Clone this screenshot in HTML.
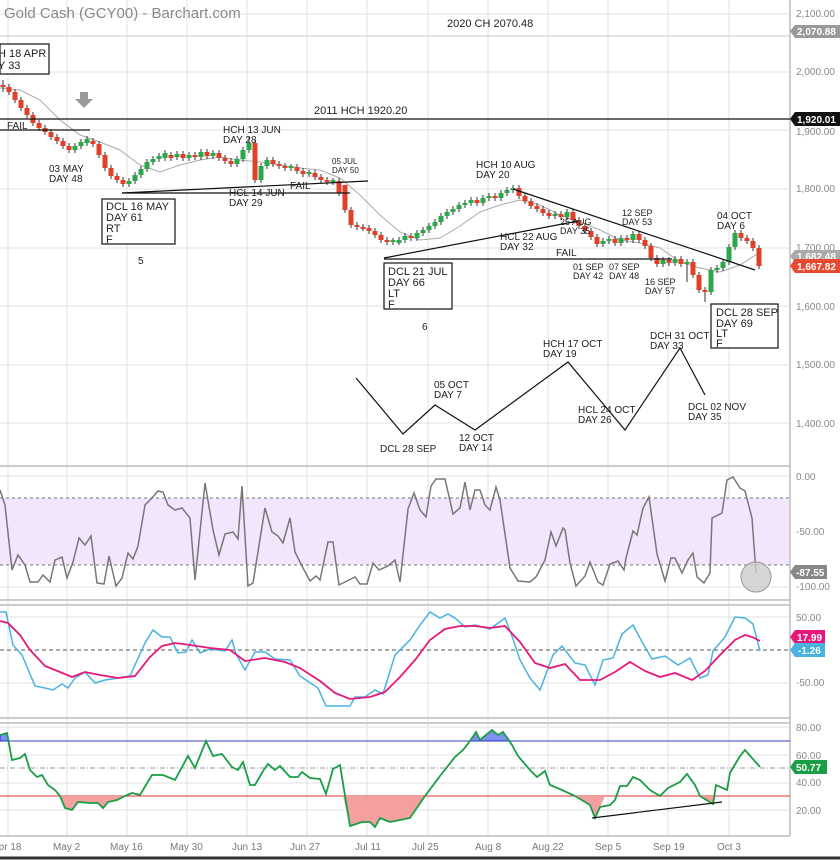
<!DOCTYPE html>
<html><head><meta charset="utf-8"><style>
body{margin:0;background:#fff;}
svg{display:block;font-family:"Liberation Sans",sans-serif;}
</style></head><body>
<svg width="840" height="860" viewBox="0 0 840 860" xmlns="http://www.w3.org/2000/svg">
<rect width="840" height="860" fill="#fff"/>
<g stroke="#e2e2e2" stroke-width="1">
<path d="M8 0V836M67 0V836M127 0V836M187 0V836M247 0V836M307 0V836M367 0V836M428 0V836M488 0V836M548 0V836M608 0V836M668 0V836M729 0V836"/>
<path d="M0 14H790M0 72H790M0 130H790M0 189H790M0 248H790M0 306H790M0 365H790M0 423H790M0 476H790M0 531H790M0 587H790M0 617H790M0 683H790M0 727H790M0 755H790M0 783H790M0 810H790"/>
<path d="M0 36H790" stroke="#ccc"/>
</g>
<rect x="0" y="498" width="790" height="67" fill="#f1e6fc"/>
<line x1="0" y1="498" x2="790" y2="498" stroke="#777" stroke-dasharray="3,3"/>
<line x1="0" y1="565" x2="790" y2="565" stroke="#777" stroke-dasharray="3,3"/>
<g stroke="#ccc" stroke-width="2">
<line x1="0" y1="466" x2="790" y2="466"/><line x1="0" y1="600" x2="790" y2="600"/>
<line x1="0" y1="605" x2="790" y2="605"/><line x1="0" y1="718" x2="790" y2="718"/>
<line x1="0" y1="723" x2="790" y2="723"/><line x1="0" y1="836" x2="790" y2="836"/>
<line x1="790" y1="0" x2="790" y2="836"/>
</g>
<line x1="0" y1="858" x2="840" y2="858" stroke="#333" stroke-width="3"/>

<!-- MA -->
<polyline fill="none" stroke="#aaa" points="0,88 20,90 40,100 60,120 80,135 100,142 120,150 140,165 160,172 180,165 200,160 220,157 240,160 260,162 280,165 300,168 320,170 340,178 360,195 380,215 400,232 420,240 440,238 460,226 480,212 500,205 520,200 540,205 560,215 580,222 600,230 620,240 640,243 660,248 680,262 700,268 720,272 740,265 760,252"/>
<!-- wicks -->
<path stroke="#333" stroke-width="1" fill="none" d="M3 80V92M9 84V95M15 89V103M21 97V111M27 105V118M33 112V126M39 120V131M45 125V135M51 129V140M57 134V144M63 138V149M69 143V153M75 143V153M81 139V149M87 136V146M93 138V147M99 141V158M105 152V171M111 165V179M117 173V183M123 177V187M129 178V187M135 172V184M141 166V178M147 159V172M153 156V165M159 153V162M165 150V161M171 152V161M177 151V160M183 151V161M189 152V161M195 152V160M201 149V160M207 149V159M213 150V159M219 150V161M225 155V164M231 158V167M237 156V167M243 147V162M249 137V153M255 140V183M261 163V183M267 157V169M273 157V167M279 161V169M285 163V171M291 164V171M297 164V174M303 168V177M309 170V177M315 170V180M321 174V183M327 177V185M333 178V185M339 178V196M345 185V213M351 207V228M357 222V230M363 224V231M369 225V234M375 228V238M381 232V243M387 237V245M393 238V245M399 237V245M405 233V243M411 233V241M417 230V241M423 227V236M429 223V233M435 219V229M441 213V225M447 209V219M453 206V215M459 202V212M465 200V208M471 197V206M477 197V206M483 195V206M489 193V201M495 193V201M501 190V201M507 187V196M513 185V193M519 185V199M525 193V204M531 198V209M537 203V212M543 206V216M549 210V219M555 211V219M561 211V220M567 209V220M573 209V223M579 217V229M585 223V234M591 228V240M597 234V247M603 238V247M609 236V244M615 236V246M621 235V246M627 235V243M633 231V243M639 231V243M645 237V249M651 243V261M657 255V267M663 257V267M669 257V266M675 256V266M681 256V267M687 259V282M693 259V278M699 272V293M705 287V302M711 267V295M717 265V273M723 259V271M729 244V265M735 230V250M741 230V241M747 235V244M753 238V251M759 245V269"/>
<!-- green bodies -->
<path stroke="#2aa84a" stroke-width="5" fill="none" d="M75 150V146M81 146V142M87 143V139M129 184V181M135 181V175M141 175V169M147 169V162M153 162V159M159 159V156M165 158V153M177 157V154M189 158V155M201 157V152M213 156V153M237 164V159M243 159V150M249 150V143M261 180V166M267 166V160M291 168V166M309 174V172M333 182V180M393 242V240M399 243V240M405 240V236M417 238V233M423 233V230M429 230V226M435 226V222M441 222V216M447 216V212M453 212V209M459 209V205M465 205V203M471 203V200M483 203V198M489 198V196M501 198V193M507 193V190M513 190V188M555 216V214M567 217V212M603 244V241M609 241V239M621 243V238M633 240V234M663 264V260M675 263V259M687 264V262M711 292V270M717 270V268M723 268V262M729 262V247M735 247V233"/>
<!-- red bodies -->
<path stroke="#e0402a" stroke-width="5" fill="none" d="M3 85V87M9 87V92M15 92V100M21 100V108M27 108V115M33 115V123M39 123V128M45 128V132M51 132V137M57 137V141M63 141V146M69 146V150M93 141V144M99 144V155M105 155V168M111 168V176M117 176V180M123 180V184M171 155V158M183 154V158M195 155V157M207 152V156M219 153V158M225 158V161M231 161V164M255 143V180M273 160V164M279 164V166M285 166V168M297 167V171M303 171V174M315 173V177M321 177V180M327 180V182M339 181V193M345 185V210M351 210V225M357 225V227M363 227V229M369 228V231M375 231V235M381 235V240M387 240V242M411 236V238M477 200V203M495 196V198M519 188V196M525 196V201M531 201V206M537 206V209M543 209V213M549 213V216M561 214V217M573 212V220M579 220V226M585 226V231M591 231V237M597 237V244M615 239V243M627 238V240M639 234V240M645 240V246M651 246V258M657 258V264M669 260V263M681 259V264M693 262V275M699 275V290M705 290V292M741 233V238M747 238V241M753 241V248M759 248V266"/>

<!-- main annotations -->
<g stroke="#111" stroke-width="1.2" fill="none">
<line x1="0" y1="119" x2="790" y2="119"/>
<line x1="0" y1="130" x2="90" y2="130"/>
<line x1="122" y1="193" x2="368" y2="181"/>
<line x1="122" y1="193" x2="350" y2="193"/>
<line x1="384" y1="258" x2="578" y2="221"/>
<line x1="384" y1="259" x2="672" y2="259"/>
<line x1="513" y1="189" x2="755" y2="270"/>
<rect x="0" y="44" width="49" height="30" fill="#fff"/>
<rect x="102" y="199" width="73" height="45" fill="#fff"/>
<rect x="384" y="263" width="68" height="46" fill="#fff"/>
<rect x="711" y="304" width="67" height="44" fill="#fff"/>
<polyline points="356,378 403,434 435,405 475,430 568,362 625,430 680,348 705,395"/>
</g>
<path d="M80 92h8v7h5l-9 9-9-9h5z" fill="#999"/>
<g font-size="10" fill="#222">
<text x="4" y="18" font-size="15" fill="#888">Gold Cash (GCY00) - Barchart.com</text>
<text x="447" y="27" font-size="11">2020 CH 2070.48</text>
<text x="314" y="114" font-size="11">2011 HCH 1920.20</text>
<text x="-2" y="57" font-size="11">H 18 APR</text><text x="-2" y="69" font-size="11">Y 33</text>
<text x="7" y="129">FAIL</text>
<text x="49" y="172">03 MAY</text><text x="49" y="182">DAY 48</text>
<text x="106" y="210" font-size="11">DCL 16 MAY</text><text x="106" y="221" font-size="11">DAY 61</text><text x="106" y="232" font-size="11">RT</text><text x="106" y="243" font-size="11">F</text>
<text x="138" y="264">5</text>
<text x="223" y="133">HCH 13 JUN</text><text x="223" y="143">DAY 28</text>
<text x="229" y="196">HCL 14 JUN</text><text x="229" y="206">DAY 29</text>
<text x="290" y="189">FAIL</text>
<text x="332" y="164" font-size="8">05 JUL</text><text x="332" y="173" font-size="8">DAY 50</text>
<text x="388" y="275" font-size="11">DCL 21 JUL</text><text x="388" y="286" font-size="11">DAY 66</text><text x="388" y="297" font-size="11">LT</text><text x="388" y="308" font-size="11">F</text>
<text x="422" y="330">6</text>
<text x="476" y="168">HCH 10 AUG</text><text x="476" y="178">DAY 20</text>
<text x="500" y="240">HCL 22 AUG</text><text x="500" y="250">DAY 32</text>
<text x="556" y="256">FAIL</text>
<text x="560" y="225" font-size="9">25 AUG</text><text x="560" y="234" font-size="9">DAY 35</text>
<text x="622" y="216" font-size="9">12 SEP</text><text x="622" y="225" font-size="9">DAY 53</text>
<text x="573" y="270" font-size="9">01 SEP</text><text x="573" y="279" font-size="9">DAY 42</text>
<text x="609" y="270" font-size="9">07 SEP</text><text x="609" y="279" font-size="9">DAY 48</text>
<text x="645" y="285" font-size="9">16 SEP</text><text x="645" y="294" font-size="9">DAY 57</text>
<text x="717" y="219">04 OCT</text><text x="717" y="229">DAY 6</text>
<text x="716" y="316" font-size="11">DCL 28 SEP</text><text x="716" y="327" font-size="11">DAY 69</text><text x="716" y="337" font-size="11">LT</text><text x="716" y="347" font-size="11">F</text>
<text x="650" y="339">DCH 31 OCT</text><text x="650" y="349">DAY 33</text>
<text x="543" y="347">HCH 17 OCT</text><text x="543" y="357">DAY 19</text>
<text x="434" y="388">05 OCT</text><text x="434" y="398">DAY 7</text>
<text x="578" y="413">HCL 24 OCT</text><text x="578" y="423">DAY 26</text>
<text x="688" y="410">DCL 02 NOV</text><text x="688" y="420">DAY 35</text>
<text x="380" y="452">DCL 28 SEP</text>
<text x="459" y="441">12 OCT</text><text x="459" y="451">DAY 14</text>
</g>

<!-- panel 2 -->
<polyline fill="none" stroke="#777" stroke-width="1.5" points="0,490 5,505 12,570 18,555 25,565 30,582 38,582 43,575 50,582 55,560 62,557 67,578 73,562 79,538 85,545 91,536 97,583 104,584 109,556 116,586 122,578 128,553 133,559 138,546 145,505 152,498 158,491 163,492 168,505 175,510 182,508 190,518 195,580 205,483 213,530 219,555 225,534 233,532 238,539 242,486 248,586 253,583 265,508 272,532 278,536 283,543 290,518 295,552 303,568 310,581 316,576 320,580 328,542 333,542 339,585 345,582 355,577 360,584 367,584 373,563 379,570 388,566 395,560 400,582 408,509 414,493 420,510 426,517 431,486 436,479 445,479 453,514 460,508 465,482 470,510 475,490 480,490 485,505 490,510 496,487 500,500 510,568 518,581 530,582 536,577 545,560 551,532 556,546 563,528 565,530 570,563 576,586 585,576 590,562 598,582 603,585 610,564 618,561 624,570 626,558 633,531 637,535 643,508 649,497 657,554 665,581 671,558 675,558 682,573 688,560 693,553 697,577 704,583 710,573 712,518 722,513 727,480 733,477 740,488 745,491 752,518 756,573"/>
<circle cx="756" cy="577" r="15" fill="#ccc" fill-opacity="0.8" stroke="#999"/>

<!-- panel 3 -->
<line x1="0" y1="650" x2="790" y2="650" stroke="#555" stroke-dasharray="4,3"/>
<polyline fill="none" stroke="#48b3e0" stroke-width="1.5" points="0,612 6,612 13,645 22,655 35,686 45,688 53,690 62,684 68,688 75,678 85,672 95,683 105,680 112,679 130,676 145,643 153,630 162,637 170,637 178,653 186,652 192,640 200,653 210,649 225,651 232,640 236,654 245,670 255,652 265,652 275,659 290,660 300,676 318,688 326,706 335,706 350,706 355,697 365,697 375,690 383,694 395,655 410,640 420,625 430,612 440,618 448,614 455,618 465,627 475,625 490,629 505,618 512,636 520,660 530,678 540,690 553,655 562,646 575,663 585,665 595,685 603,660 613,658 622,634 633,625 641,640 652,659 665,656 678,665 690,658 700,678 708,675 713,651 725,637 735,617 745,618 753,624 760,651"/>
<polyline fill="none" stroke="#e6197a" stroke-width="1.8" points="0,621 8,623 20,635 30,650 45,666 60,672 72,677 85,672 100,675 118,678 135,676 150,657 162,646 175,643 190,645 210,648 230,650 245,661 265,658 285,662 300,668 320,681 335,693 350,699 370,697 385,692 400,677 415,660 430,640 445,629 460,626 475,626 490,628 505,626 520,642 535,663 550,668 565,664 580,680 600,680 615,672 630,662 645,671 660,677 675,673 692,680 705,671 720,655 735,640 745,635 752,637 760,641"/>

<!-- panel 4 -->
<line x1="0" y1="741" x2="790" y2="741" stroke="#3040c0"/>
<line x1="0" y1="796" x2="790" y2="796" stroke="#e03030"/>
<line x1="0" y1="768" x2="790" y2="768" stroke="#999" stroke-dasharray="5,2,1,2"/>
<path d="M60 796 L65 808 L72 810 L78 802 L90 803 L98 803 L103 808 L108 802 L117 800 L125 796Z" fill="#f4a0a0"/>
<path d="M343 796 L350 826 L362 822 L370 822 L375 827 L380 818 L390 822 L400 820 L410 818 L425 796Z" fill="#f4a0a0"/>
<path d="M575 796 L590 805 L595 818 L600 807 L605 796Z M700 796 L713 804 L716 796Z" fill="#f4a0a0"/>
<path d="M0 741 L0 735 L7 733 L9 741Z M470 741 L476 732 L480 740 L486 735 L492 730 L498 735 L503 732 L510 741Z" fill="#8090f0" stroke="#2030c0"/>
<polyline fill="none" stroke="#1a9e45" stroke-width="1.8" points="0,735 7,733 12,760 20,758 25,754 30,770 37,777 42,775 48,785 55,790 60,796 65,808 72,810 78,802 90,803 98,803 103,808 108,802 117,800 125,796 132,793 140,795 152,775 163,775 175,780 188,756 195,768 206,741 213,756 222,754 232,767 238,770 243,762 250,785 255,785 263,771 268,764 275,770 280,766 290,777 298,777 302,772 310,778 320,779 326,794 333,769 340,765 350,826 362,822 370,822 375,827 380,818 390,822 400,820 410,818 425,796 440,776 455,757 463,750 470,741 476,732 480,740 486,735 492,730 498,735 503,732 512,745 518,756 530,770 537,777 545,771 550,785 562,790 575,796 590,805 595,818 600,807 610,805 615,800 620,786 627,786 633,777 640,780 650,790 660,796 668,788 680,782 687,774 695,785 700,796 713,804 716,785 727,790 730,773 740,756 745,750 752,758 760,767"/>
<path d="M343 796V826M60 796V808" stroke="#e03030" stroke-width="0"/>
<line x1="592" y1="818" x2="722" y2="802" stroke="#111" stroke-width="1.2"/>

<!-- right axis -->
<g font-size="10" fill="#888">
<text x="796" y="17">2,100.00</text><text x="796" y="75">2,000.00</text><text x="796" y="135">1,900.00</text>
<text x="796" y="192">1,800.00</text><text x="796" y="251">1,700.00</text><text x="796" y="310">1,600.00</text>
<text x="796" y="368">1,500.00</text><text x="796" y="427">1,400.00</text>
<text x="796" y="480">0.00</text><text x="796" y="535">-50.00</text><text x="796" y="590">-100.00</text>
<text x="796" y="621">50.00</text><text x="796" y="686">-50.00</text>
<text x="796" y="731">80.00</text><text x="796" y="759">60.00</text><text x="796" y="786">40.00</text><text x="796" y="814">20.00</text>
</g>
<g font-size="10" font-weight="bold" fill="#fff">
<path d="M790 31l5-6h45v13h-45z" fill="#999"/><text x="797" y="35">2,070.88</text>
<path d="M790 119l5-7h45v14h-45z" fill="#111"/><text x="797" y="123">1,920.01</text>
<path d="M790 256l5-6h45v13h-45z" fill="#aaa"/><text x="797" y="260">1,682.48</text>
<path d="M790 266l5-7h45v14h-45z" fill="#e8492f"/><text x="797" y="270">1,667.82</text>
<path d="M790 572l5-7h32v14h-32z" fill="#888"/><text x="796" y="576">-87.55</text>
<path d="M790 637l5-7h30v14h-30z" fill="#e6197a"/><text x="797" y="641">17.99</text>
<path d="M790 650l5-7h30v14h-30z" fill="#48b3e0"/><text x="798" y="654">-1.26</text>
<path d="M790 767l5-7h32v14h-32z" fill="#1a9e45"/><text x="796" y="771">50.77</text>
</g>
<g font-size="10" fill="#777">
<text x="-8" y="850">Apr 18</text><text x="53" y="850">May 2</text><text x="110" y="850">May 16</text>
<text x="170" y="850">May 30</text><text x="232" y="850">Jun 13</text><text x="290" y="850">Jun 27</text>
<text x="355" y="850">Jul 11</text><text x="412" y="850">Jul 25</text><text x="475" y="850">Aug 8</text>
<text x="532" y="850">Aug 22</text><text x="595" y="850">Sep 5</text><text x="653" y="850">Sep 19</text><text x="717" y="850">Oct 3</text>
</g>
</svg>
</body></html>
